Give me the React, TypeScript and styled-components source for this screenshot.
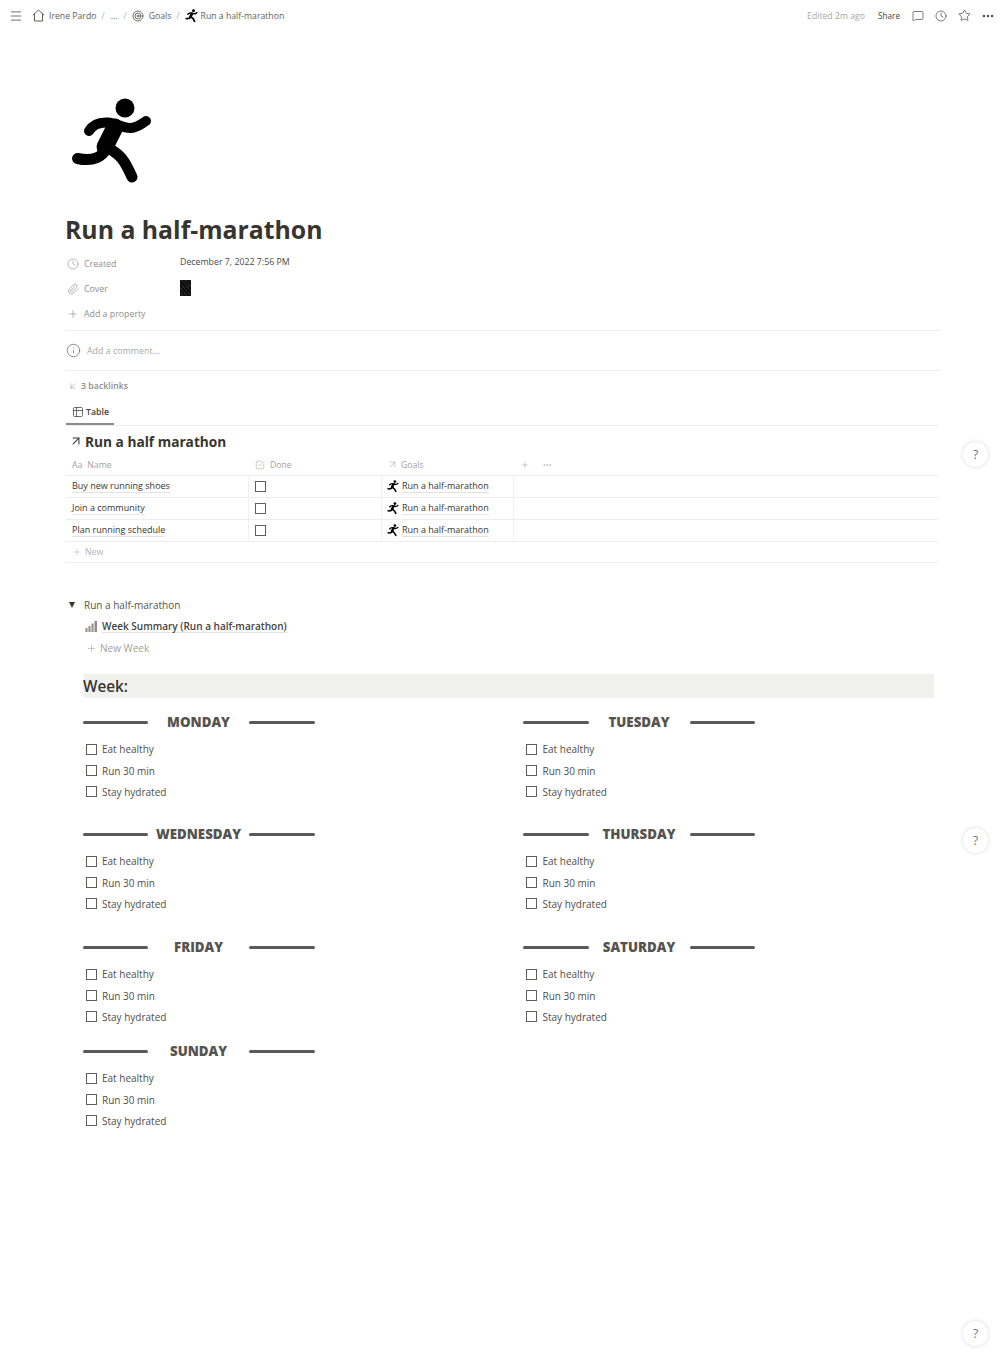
import { ReactNode } from 'react'
import styled, { createGlobalStyle } from 'styled-components'
import {
  ArrowDownLeft,
  ArrowUpRight,
  CheckSquare,
  Clock,
  Info,
  Menu,
  MessageSquare,
  MoreHorizontal,
  Paperclip,
  Plus,
  Star,
  Table2,
  Target,
} from 'lucide-react'

const GlobalStyle = createGlobalStyle`
  html, body {
    margin: 0;
    padding: 0;
    background: #fff;
  }
  body {
    font-family: 'Open Sans', 'Liberation Sans', sans-serif;
    color: #37352f;
  }
`

const Page = styled.div`
  position: relative;
  width: 1005px;
  height: 1362px;
  overflow: hidden;
  background: #fff;
`

const TopBar = styled.header`
  display: flex;
  align-items: center;
  justify-content: space-between;
  box-sizing: border-box;
  height: 30px;
  padding: 1px 5px 0 9px;
  font-size: 8.7px;
  color: #5f5e5a;
`

const Crumbs = styled.nav`
  display: flex;
  align-items: center;
`

const Crumb = styled.span<{ $ml?: number }>`
  display: inline-flex;
  align-items: center;
  margin-left: ${(p) => p.$ml ?? 0}px;
`

const Slash = styled.span<{ $ml: number }>`
  margin-left: ${(p) => p.$ml}px;
  color: #b5b4b0;
`

const Actions = styled.div`
  display: flex;
  align-items: center;
`

const Edited = styled.span`
  color: #a9a8a4;
  margin-right: 13px;
`

const Share = styled.span`
  font-size: 8.2px;
  color: #45433e;
  margin-right: 6px;
`

const ActionIcon = styled.span`
  display: inline-flex;
  justify-content: center;
  width: 23.5px;
  color: #55534e;
`

const Content = styled.main`
  width: 875px;
  margin-left: 65px;
`

const PageIcon = styled.div`
  padding: 67px 0 0 5px;
  height: 88px;
`

const Title = styled.h1`
  margin: 24px 0 2px;
  height: 40px;
  line-height: 40px;
  font-size: 24.8px;
  font-weight: 700;
  color: #37352f;
`

const PropRow = styled.div`
  display: flex;
  align-items: center;
  height: 25px;
  padding-left: 2px;
  font-size: 8.8px;
  color: #8f8e8a;
`

const PropLabel = styled.div`
  display: flex;
  align-items: center;
  gap: 5px;
  width: 113px;
`

const PropValue = styled.div`
  color: #4c4a45;
  margin-top: -3px;
`

const CoverThumb = styled.div`
  width: 11px;
  height: 16px;
  margin-top: -2px;
  background: repeating-linear-gradient(50deg, #0c0c0c 0 2px, #2b2b2b 2px 3px);
`

const CommentRow = styled.div`
  display: flex;
  align-items: center;
  gap: 6px;
  height: 39px;
  margin-top: 4px;
  padding-left: 1px;
  border-top: 1px solid #ededec;
  border-bottom: 1px solid #ededec;
  font-size: 8.9px;
  color: #a9a8a4;
`

const Backlinks = styled.div`
  display: flex;
  align-items: center;
  gap: 3px;
  height: 29px;
  padding-left: 3px;
  font-size: 8.8px;
  font-weight: 600;
  color: #8f8e8a;
`

const TabBar = styled.div`
  height: 25px;
  margin-left: 1px;
  width: 873px;
  border-bottom: 1px solid #ededec;
`

const Tab = styled.div`
  display: flex;
  align-items: center;
  gap: 2px;
  box-sizing: border-box;
  width: 48px;
  height: 25px;
  padding-left: 6px;
  border-bottom: 2px solid #8b8a86;
  font-size: 8.8px;
  font-weight: 600;
  color: #45433e;
`

const TableTitle = styled.h2`
  display: flex;
  align-items: center;
  gap: 2px;
  height: 24px;
  margin: 3px 0 1px;
  padding-left: 4px;
  font-size: 13.7px;
  font-weight: 700;
  color: #37352f;
`

const DataTable = styled.div`
  width: 872px;
  margin-left: 1px;
`

const TableRow = styled.div<{ $head?: boolean }>`
  display: grid;
  grid-template-columns: 183px 133px 132px 1fr;
  height: 22px;
  box-sizing: border-box;
  border-bottom: 1px solid #ededec;
  color: ${(p) => (p.$head ? '#a3a29e' : '#45433e')};
  font-size: ${(p) => (p.$head ? 8.7 : 9)}px;
`

const Cell = styled.div<{ $head?: boolean; $tight?: boolean }>`
  display: flex;
  align-items: center;
  gap: ${(p) => (p.$tight ? 3 : 5)}px;
  padding-left: ${(p) => (p.$tight ? 5 : 6)}px;
  min-width: 0;
  border-right: ${(p) => (p.$head ? 'none' : '1px solid #f1f1f0')};
  &:last-child {
    border-right: none;
  }
`

const Underlined = styled.span<{ $strong?: boolean }>`
  border-bottom: 1px solid #e3e3e1;
  line-height: 12px;
  font-weight: ${(p) => (p.$strong ? 600 : 400)};
  color: ${(p) => (p.$strong ? '#45433e' : '#37352f')};
`

const HeadTools = styled.div`
  display: flex;
  align-items: center;
  gap: 12px;
  padding-left: 6px;
  color: #a3a29e;
`

const Box = styled.span<{ $size?: number }>`
  display: inline-block;
  box-sizing: border-box;
  flex: none;
  width: ${(p) => p.$size ?? 11}px;
  height: ${(p) => p.$size ?? 11}px;
  border: 1.5px solid #5f5e5a;
`

const NewRow = styled.div`
  display: flex;
  align-items: center;
  gap: 3px;
  box-sizing: border-box;
  height: 21px;
  padding-left: 6px;
  border-bottom: 1px solid #ededec;
  font-size: 8.8px;
  color: #b4b3af;
`

const Toggle = styled.div`
  display: flex;
  align-items: center;
  height: 22px;
  margin-top: 31px;
  padding-left: 4px;
  font-size: 10px;
  color: #55534e;
`

const Caret = styled.span`
  width: 0;
  height: 0;
  margin-right: 9px;
  border-left: 3.5px solid transparent;
  border-right: 3.5px solid transparent;
  border-top: 6px solid #37352f;
`

const LinkedView = styled.div`
  display: flex;
  align-items: center;
  gap: 4px;
  height: 21px;
  padding-left: 20px;
  font-size: 10px;
`

const NewWeek = styled.div`
  display: flex;
  align-items: center;
  gap: 3px;
  height: 22px;
  padding-left: 21px;
  font-size: 10px;
  color: #a3a29e;
`

const WeekBar = styled.div`
  display: flex;
  align-items: center;
  height: 24px;
  width: 851px;
  margin: 15px 0 0 18px;
  box-sizing: border-box;
  background: #f1f1ef;
  font-size: 15.3px;
  font-weight: 600;
  color: #37352f;
`

const DayGrid = styled.div`
  display: grid;
  grid-template-columns: 440.5px 1fr;
  grid-template-rows: 112px 113px 104px auto;
  margin: 12px 0 0 17.5px;
`

const DayHead = styled.div`
  display: grid;
  grid-template-columns: 65.5px 1fr 65.5px;
  align-items: center;
  width: 232px;
  height: 24px;
  margin-bottom: 4.6px;
  font-size: 13.3px;
  font-weight: 800;
  color: #55534e;
  text-align: center;
`

const DayLine = styled.span`
  height: 3px;
  border-radius: 2px;
  background: #5a5a5a;
`

const Todo = styled.div`
  display: flex;
  align-items: center;
  gap: 5.5px;
  height: 21.3px;
  padding-left: 3px;
  font-size: 10px;
  color: #504e49;
`

const HelpButton = styled.div<{ $top: number }>`
  position: absolute;
  left: 963px;
  top: ${(p) => p.$top}px;
  display: flex;
  align-items: center;
  justify-content: center;
  width: 25px;
  height: 25px;
  border-radius: 50%;
  background: #fff;
  box-shadow: 0 0 4px rgba(15, 15, 15, 0.16);
  font-size: 12px;
  color: #6f6e69;
`

const Runner = ({ size }: { size: number }) => (
  <svg width={size} height={(size * 88) / 84} viewBox="0 0 84 88" style={{ flex: 'none', display: 'block' }}>
    <circle cx="55" cy="11" r="9.5" fill="#000" />
    <g fill="none" stroke="#000" strokeLinecap="round" strokeLinejoin="round">
      <path d="M19 34C23 27 30 25 38 25.5C46 26 52 31 60 31C67 31 71 27 76 24" strokeWidth="10" />
      <path d="M45 30L35 50" strokeWidth="17" />
      <path d="M38 50C32 60 24 65 7.5 61.5" strokeWidth="11" />
      <path d="M40 52C50 58 54 62 62 80" strokeWidth="11" />
    </g>
  </svg>
)

const HomeIcon = () => (
  <svg width="13" height="13" viewBox="0 0 13 13" fill="none" stroke="#5f5e5a" strokeWidth="1">
    <path d="M0.8 6.3L6.5 1L12.2 6.3M2.5 5V12H10.5V5" strokeLinejoin="round" />
  </svg>
)

const BarsIcon = () => (
  <svg width="13" height="13" viewBox="0 0 13 13" fill="#8f8e8a">
    <rect x="0.5" y="8" width="2" height="4" />
    <rect x="3.5" y="6" width="2" height="6" />
    <rect x="6.5" y="3.5" width="2" height="8.5" />
    <rect x="9.5" y="1" width="2.5" height="11" />
  </svg>
)

const TableRowItem = ({ name }: { name: string }) => (
  <TableRow>
    <Cell>
      <Underlined>{name}</Underlined>
    </Cell>
    <Cell>
      <Box />
    </Cell>
    <Cell $tight>
      <Runner size={12} />
      <Underlined>Run a half-marathon</Underlined>
    </Cell>
    <Cell />
  </TableRow>
)

const Day = ({ name }: { name: string }) => (
  <section>
    <DayHead>
      <DayLine />
      <span>{name}</span>
      <DayLine />
    </DayHead>
    {['Eat healthy', 'Run 30 min', 'Stay hydrated'].map((t) => (
      <Todo key={t}>
        <Box />
        {t}
      </Todo>
    ))}
  </section>
)

const Prop = ({ icon, label, children }: { icon: ReactNode; label: string; children?: ReactNode }) => (
  <PropRow>
    <PropLabel>
      {icon}
      {label}
    </PropLabel>
    {children}
  </PropRow>
)

const days = ['MONDAY', 'TUESDAY', 'WEDNESDAY', 'THURSDAY', 'FRIDAY', 'SATURDAY', 'SUNDAY']
const tasks = ['Buy new running shoes', 'Join a community', 'Plan running schedule']

export default function App() {
  return (
    <Page>
      <GlobalStyle />
      <TopBar>
        <Crumbs>
          <Menu size={14} strokeWidth={1.5} />
          <Crumb $ml={9}>
            <HomeIcon />
          </Crumb>
          <Crumb $ml={4}>Irene Pardo</Crumb>
          <Slash $ml={5}>/</Slash>
          <Crumb $ml={6}>...</Crumb>
          <Slash $ml={6}>/</Slash>
          <Crumb $ml={5}>
            <Target size={12} strokeWidth={1.75} />
          </Crumb>
          <Crumb $ml={5}>Goals</Crumb>
          <Slash $ml={5}>/</Slash>
          <Crumb $ml={5}>
            <Runner size={13} />
          </Crumb>
          <Crumb $ml={3}>Run a half-marathon</Crumb>
        </Crumbs>
        <Actions>
          <Edited>Edited 2m ago</Edited>
          <Share>Share</Share>
          <ActionIcon>
            <MessageSquare size={12} strokeWidth={1.5} />
          </ActionIcon>
          <ActionIcon>
            <Clock size={12} strokeWidth={1.5} />
          </ActionIcon>
          <ActionIcon>
            <Star size={13} strokeWidth={1.5} />
          </ActionIcon>
          <ActionIcon>
            <MoreHorizontal size={14} strokeWidth={2.5} />
          </ActionIcon>
        </Actions>
      </TopBar>
      <Content>
        <PageIcon>
          <Runner size={84} />
        </PageIcon>
        <Title>Run a half-marathon</Title>
        <Prop icon={<Clock size={12} strokeWidth={1.25} />} label="Created">
          <PropValue>December 7, 2022 7:56 PM</PropValue>
        </Prop>
        <Prop icon={<Paperclip size={12} strokeWidth={1.25} />} label="Cover">
          <CoverThumb />
        </Prop>
        <Prop icon={<Plus size={12} strokeWidth={1.25} />} label="Add a property" />
        <CommentRow>
          <Info size={15} strokeWidth={1.25} color="#6f6e69" />
          Add a comment...
        </CommentRow>
        <Backlinks>
          <ArrowDownLeft size={10} strokeWidth={1.25} />3 backlinks
        </Backlinks>
        <TabBar>
          <Tab>
            <Table2 size={12} strokeWidth={1.5} />
            Table
          </Tab>
        </TabBar>
        <TableTitle>
          <ArrowUpRight size={14} strokeWidth={1.75} />
          Run a half marathon
        </TableTitle>
        <DataTable>
          <TableRow $head>
            <Cell $head>
              <span>Aa</span>
              <span>Name</span>
            </Cell>
            <Cell $head>
              <CheckSquare size={10} strokeWidth={1.25} />
              Done
            </Cell>
            <Cell $head $tight>
              <ArrowUpRight size={11} strokeWidth={1.25} />
              Goals
            </Cell>
            <HeadTools>
              <Plus size={10} strokeWidth={1.25} />
              <MoreHorizontal size={10} strokeWidth={1.5} />
            </HeadTools>
          </TableRow>
          {tasks.map((t) => (
            <TableRowItem key={t} name={t} />
          ))}
          <NewRow>
            <Plus size={10} strokeWidth={1.25} />
            New
          </NewRow>
        </DataTable>
        <Toggle>
          <Caret />
          Run a half-marathon
        </Toggle>
        <LinkedView>
          <BarsIcon />
          <Underlined $strong>Week Summary (Run a half-marathon)</Underlined>
        </LinkedView>
        <NewWeek>
          <Plus size={11} strokeWidth={1.25} />
          New Week
        </NewWeek>
        <WeekBar>Week:</WeekBar>
        <DayGrid>
          {days.map((d) => (
            <Day key={d} name={d} />
          ))}
        </DayGrid>
      </Content>
      <HelpButton $top={442}>?</HelpButton>
      <HelpButton $top={828}>?</HelpButton>
      <HelpButton $top={1321}>?</HelpButton>
    </Page>
  )
}
